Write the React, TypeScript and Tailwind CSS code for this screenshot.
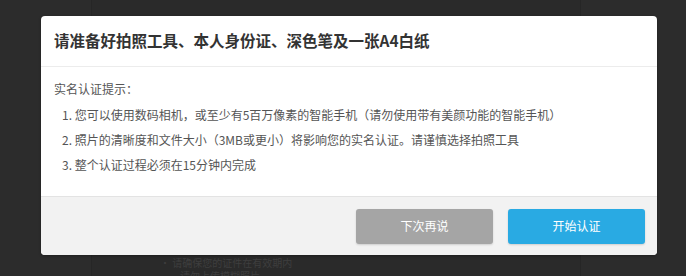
import React from "react";

export default function App() {
  const font = { fontFamily: '"Microsoft YaHei", "Noto Sans CJK SC", "Liberation Sans", sans-serif' };
  return (
    <div className="relative w-[686px] h-[276px] overflow-hidden bg-[#2c2c2c]" style={font}>
      {/* page behind overlay */}
      <div className="ml-[91px] w-[490px] h-[276px] bg-[#2a2a2a] border-x border-[#262626] flex flex-col pt-[256px]">
        <div className="pl-[68px] text-[10px] leading-[13px] text-[#3e3e3e]">
          <div>· 请确保您的证件在有效期内</div>
          <div className="pl-[20px]">请勿上传模糊照片</div>
        </div>
      </div>

      {/* modal */}
      <div className="absolute left-[41px] top-[16px] w-[616px] h-[239px] rounded-[4px] bg-white overflow-hidden flex flex-col shadow-[0_1px_3px_rgba(0,0,0,0.3)]">
        <div className="h-[51px] flex items-center px-[13px] border-b border-[#ececec]">
          <h2 className="text-[15.5px] font-bold text-[#333] leading-none">
            请准备好拍照工具、本人身份证、深色笔及一张A4白纸
          </h2>
        </div>
        <div className="flex-1 px-[13px] pt-[14px] text-[12px] text-[#555] leading-[16px]">
          <p>实名认证提示：</p>
          <ol className="pl-[8px] mt-[10px] flex flex-col gap-[9px]">
            <li>1. 您可以使用数码相机，或至少有5百万像素的智能手机（请勿使用带有美颜功能的智能手机）</li>
            <li>2. 照片的清晰度和文件大小（3MB或更小）将影响您的实名认证。请谨慎选择拍照工具</li>
            <li>3. 整个认证过程必须在15分钟内完成</li>
          </ol>
        </div>
        <div className="h-[59px] bg-[#f2f2f2] border-t border-[#e3e3e3] flex items-center justify-end gap-[15px] pr-[12px]">
          <button className="w-[137px] h-[35px] rounded-[3px] bg-[#a5a5a5] text-white text-[12px] shadow-[0_1px_2px_rgba(0,0,0,0.15)]">
            下次再说
          </button>
          <button className="w-[137px] h-[35px] rounded-[3px] bg-[#29aae3] text-white text-[12px] shadow-[0_1px_2px_rgba(0,0,0,0.15)]">
            开始认证
          </button>
        </div>
      </div>
    </div>
  );
}
